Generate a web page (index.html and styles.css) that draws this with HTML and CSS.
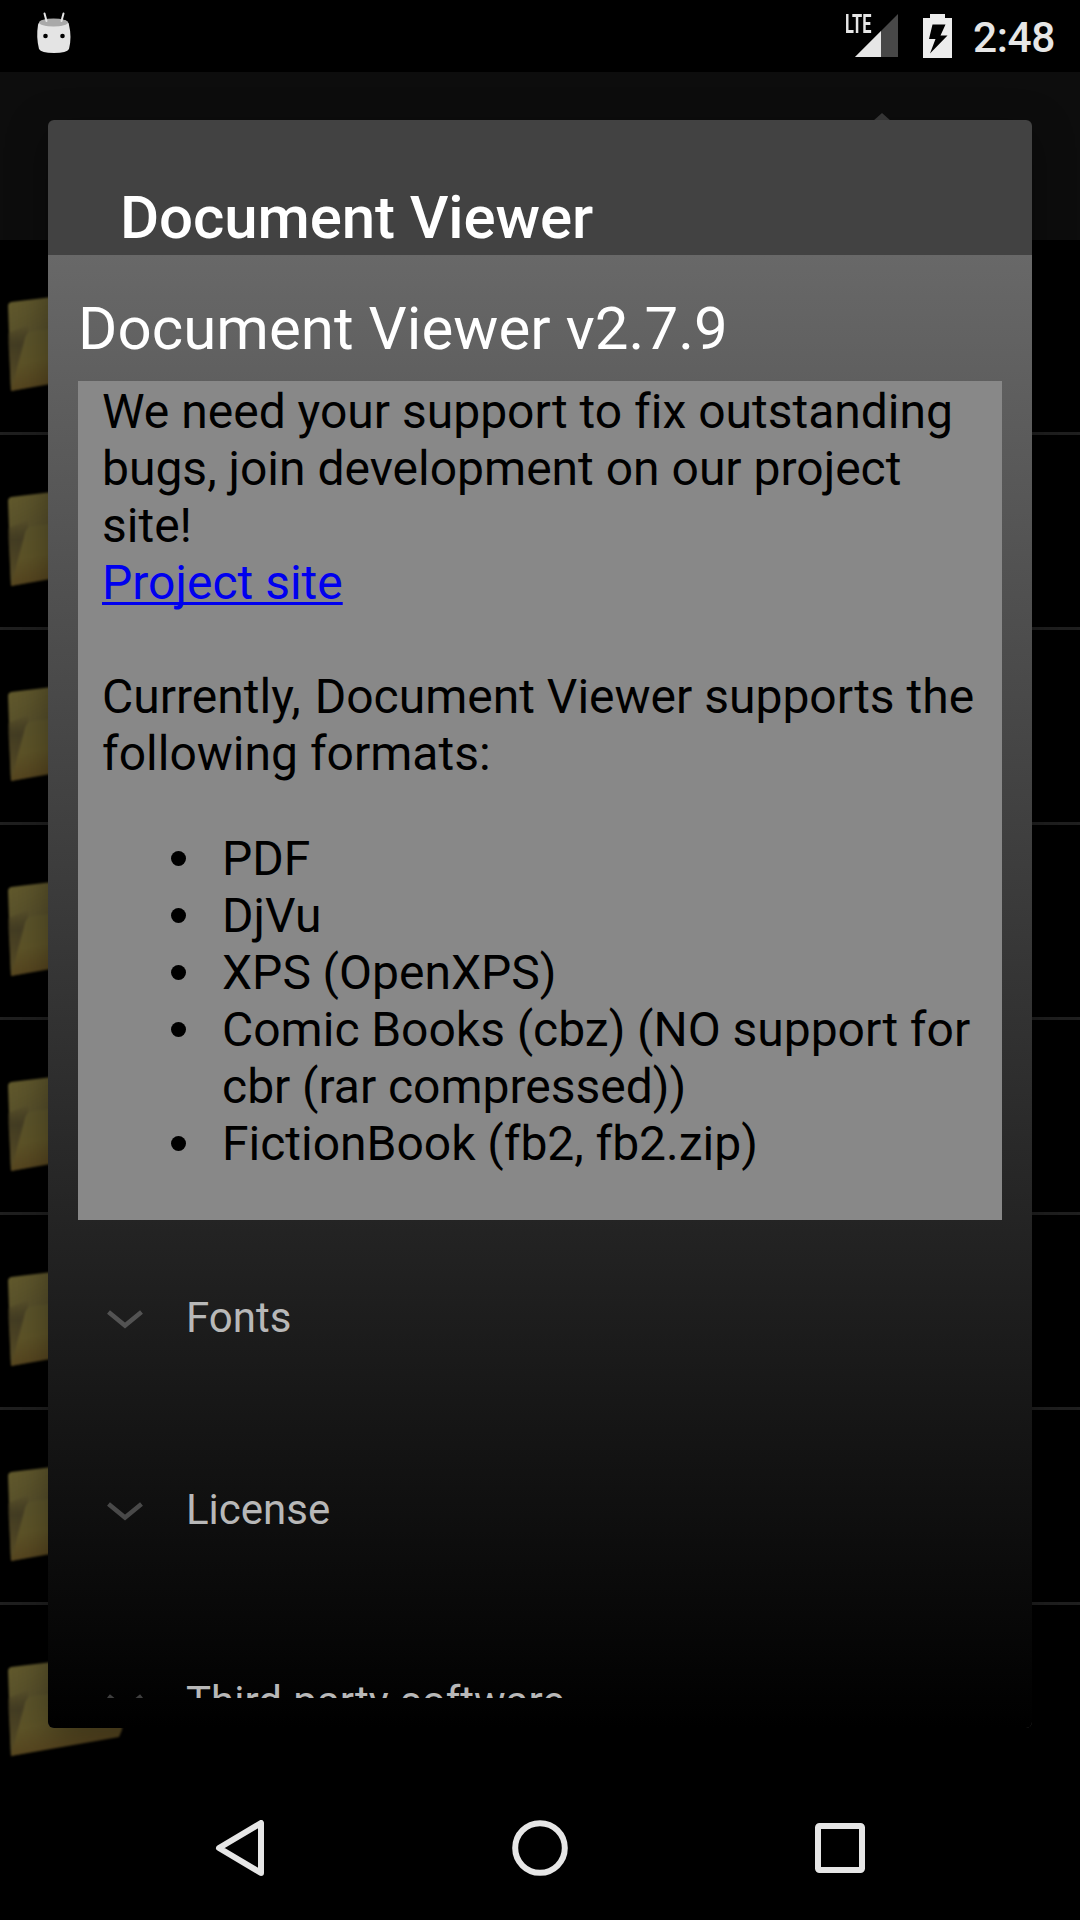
FILE: index.html
```html
<!DOCTYPE html>
<html lang="en">
<head>
<meta charset="utf-8">
<title>Document Viewer</title>
<link rel="stylesheet" href="styles.css">
</head>
<body>
<svg class="defs" width="0" height="0" aria-hidden="true">
  <defs>
    <linearGradient id="back" x1="0" y1="0" x2="0.6" y2="1">
      <stop offset="0" stop-color="#635b2d"/><stop offset="0.5" stop-color="#544c2a"/><stop offset="1" stop-color="#4a4123"/>
    </linearGradient>
    <linearGradient id="side" x1="0" y1="0" x2="0" y2="1">
      <stop offset="0" stop-color="#3f3820" stop-opacity="0"/><stop offset=".3" stop-color="#443d23"/><stop offset="1" stop-color="#584d26"/>
    </linearGradient>
    <linearGradient id="front" x1="0.3" y1="0" x2="0.6" y2="1">
      <stop offset="0" stop-color="#5b552c"/><stop offset="0.5" stop-color="#5e5428"/><stop offset="1" stop-color="#523e1b"/>
    </linearGradient>
    <symbol id="folder" viewBox="0 0 132 120">
      <path d="M8 21Q8 18 11 17L52 12L110 22L119 84L11 106Z" fill="url(#back)"/>
      <path d="M8 48L28 40V60L11 106Z" fill="url(#side)"/>
      <path d="M25 53Q27 46 33 46L125 36L122 80L119 87L11 106Z" fill="url(#front)"/>
    </symbol>
    <symbol id="chevron" viewBox="0 0 36 20">
      <path d="M1.500 3L18 16.500L34.500 3" fill="none" stroke="#fff" stroke-width="4.500"/>
    </symbol>
  </defs>
</svg>
<div class="screen">
  <header class="status">
    <svg class="bot" width="36" height="42" viewBox="0 0 36 42">
      <path d="M2 13Q3 7 18 7T33 13Q36 25 33 37Q31 41 18 41T3 37Q0 25 2 13Z" fill="#e4e4e4"/>
      <ellipse cx="17.500" cy="10.500" rx="14.500" ry="4" fill="#a9a9a9"/>
      <path d="M8.500 1.500L10.500 9M27.500 1.500L25.500 9" stroke="#e4e4e4" stroke-width="2" stroke-linecap="round"/>
      <circle cx="9.500" cy="24" r="2.300"/><circle cx="26.500" cy="24" r="2.300"/>
    </svg>
    <div class="indicators">
      <div class="signal">
        <svg width="43" height="43" viewBox="0 0 43 43"><path d="M43 0V43H0Z" fill="#484848"/><path d="M26 17V43H0Z" fill="#e6e6e6"/></svg>
        <span class="lte">LTE</span>
      </div>
      <svg class="battery" width="29" height="44" viewBox="0 0 29 44"><path d="M7 0H22V4H29V44H0V4H7Z" fill="#ececec"/><path d="M9.500 10.500H22.500L17.500 21.500H24.500L7 39.500L12.500 25H6Z"/></svg>
      <span class="clock">2:48</span>
    </div>
  </header>
  <div class="toolbar"></div>
  <div class="files">
    <div class="row"><svg class="folder"><use href="#folder"/></svg></div>
    <div class="row"><svg class="folder"><use href="#folder"/></svg></div>
    <div class="row"><svg class="folder"><use href="#folder"/></svg></div>
    <div class="row"><svg class="folder"><use href="#folder"/></svg></div>
    <div class="row"><svg class="folder"><use href="#folder"/></svg></div>
    <div class="row"><svg class="folder"><use href="#folder"/></svg></div>
    <div class="row"><svg class="folder"><use href="#folder"/></svg></div>
    <div class="row"><svg class="folder"><use href="#folder"/></svg></div>
  </div>
  <nav class="navbar">
    <svg width="56" height="56" viewBox="0 0 56 56"><path d="M49 3V53L7 28Z"/></svg>
    <svg width="56" height="56" viewBox="0 0 56 56"><circle cx="28" cy="28" r="24.800"/></svg>
    <svg width="56" height="56" viewBox="0 0 56 56"><rect x="6" y="6" width="44" height="44" rx="1.500"/></svg>
  </nav>
  <svg class="peak" width="18" height="9" viewBox="0 0 18 9"><path d="M0 9L9 1L18 9Z" fill="#3a3a3a"/></svg>
  <main class="dialog">
    <h1 class="title">Document Viewer</h1>
    <div class="content">
      <h2 class="version">Document Viewer v2.7.9</h2>
      <section class="about">
        <p>We need your support to fix outstanding<br>bugs, join development on our project<br>site!<br><a href="#">Project site</a></p>
        <p><span class="lead">Currently,</span> Document Viewer supports the<br>following formats:</p>
        <ul>
          <li>PDF</li><li>DjVu</li><li>XPS (OpenXPS)</li>
          <li>Comic Books (cbz) (NO support for<br>cbr (rar compressed))</li>
          <li>FictionBook (fb2, fb2.zip)</li>
        </ul>
      </section>
      <div class="group"><svg class="chevron"><use href="#chevron"/></svg><span>Fonts</span></div>
      <div class="group"><svg class="chevron"><use href="#chevron"/></svg><span>License</span></div>
      <div class="group"><svg class="chevron"><use href="#chevron"/></svg><span>Third party software</span></div>
    </div>
  </main>
</div>
</body>
</html>
```
FILE: styles.css
```css
* { box-sizing: border-box; }
body { margin: 0; background: #000; font-family: Roboto, "Liberation Sans", sans-serif; font-variant-ligatures: none; }
h1, h2, p, ul { margin: 0; padding: 0; }
.defs { position: absolute; }
.screen { position: relative; width: 1080px; height: 1920px; overflow: hidden; display: flex; flex-direction: column; }

.status { height: 72px; flex: none; display: flex; justify-content: space-between; align-items: flex-start; padding: 12px 25px 0 36px; }
.indicators { display: flex; align-items: flex-start; }
.signal { position: relative; height: 43px; margin: 2px 25px 0 0; padding-left: 12px; }
.signal svg, .battery, .bot { display: block; }
.lte { position: absolute; left: 2px; top: 0; font-size: 26px; line-height: 20px; font-weight: 700; color: #e6e6e6; transform: scaleX(.63); transform-origin: 0 0; }
.battery { margin: 2px 21px 0 0; }
.clock { font-size: 42.5px; font-weight: 500; line-height: 50px; padding-top: 1px; color: #e6e6e6; letter-spacing: -.4px; }

.toolbar { height: 168px; flex: none; background: #0d0d0d; }
.files { height: 1536px; flex: none; overflow: hidden; }
.row { height: 195px; border-bottom: 3px solid #1f1f1f; padding-top: 45px; }
.folder { display: block; width: 132px; height: 120px; filter: blur(1px); }

.navbar { height: 144px; flex: none; background: #000; display: flex; justify-content: center; align-items: center; gap: 244px; }
.navbar svg { fill: none; stroke: #e6e6e6; stroke-width: 6; stroke-linejoin: round; }

.peak { position: absolute; left: 873px; top: 112px; }
.dialog { position: absolute; left: 48px; top: 120px; width: 984px; height: 1608px; border-radius: 6px; overflow: hidden; background: #424242; display: flex; flex-direction: column; box-shadow: 0 12px 40px rgba(0,0,0,.35); }
.title { height: 135px; flex: none; padding: 63px 72px 0; font-size: 60px; line-height: 70px; font-weight: 500; letter-spacing: -.1px; color: #fff; white-space: nowrap; }
.content { height: 1473px; padding: 39px 30px 0; border-bottom: 30px solid transparent; background: linear-gradient(#686868, #000) border-box; overflow: hidden; }
.version { height: 87px; font-size: 60px; line-height: 70px; font-weight: 400; letter-spacing: .05px; color: #fff; white-space: nowrap; }
.about { height: 839px; margin-bottom: 2px; padding: 2px 24px 0; background: #888; color: #000; font-size: 48px; line-height: 57px; white-space: nowrap; }
.about p + p { margin-top: 57px; }
.about .lead { margin-right: 2px; }
.about a { color: #00e; text-decoration: underline; text-decoration-thickness: 3px; text-underline-offset: 3px; text-decoration-skip-ink: none; }
.about ul { margin-top: 48px; padding-left: 120px; list-style: none; }
.about li { position: relative; word-spacing: -.2px; }
.about li::before { content: ""; position: absolute; left: -51px; top: 21px; width: 15px; height: 15px; border-radius: 50%; background: #000; }
.group { height: 192px; display: flex; align-items: center; gap: 43px; padding-left: 29px; font-size: 42px; line-height: 50px; word-spacing: 1px; color: #b8b8b8; white-space: nowrap; }
.chevron { width: 36px; height: 20px; flex: none; opacity: .24; margin-top: 1px; }
```
